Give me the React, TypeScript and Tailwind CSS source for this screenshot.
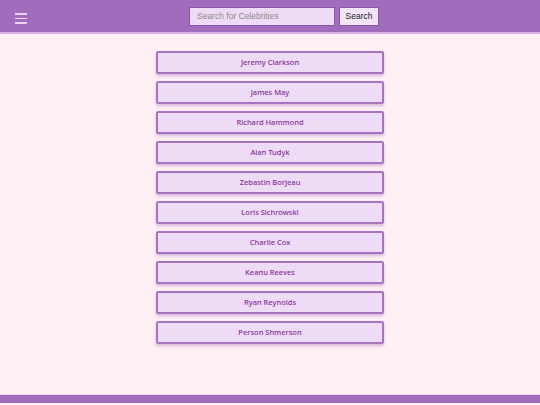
const celebrities = [
  'Jeremy Clarkson',
  'James May',
  'Richard Hammond',
  'Alan Tudyk',
  'Zebastin Borjeau',
  'Loris Sichrowski',
  'Charlie Cox',
  'Keanu Reeves',
  'Ryan Reynolds',
  'Person Shmerson',
]

export default function App() {
  return (
    <div className="flex flex-col h-[405px] bg-[#fff0f5] font-['Noto_Sans',sans-serif]">
      {/* Header */}
      <div className="h-[34px] shrink-0 bg-[#a26cbd] border-b-2 border-[#d9b3e6] flex items-center relative">
        <button className="absolute left-[15px] top-[13px] flex flex-col gap-[3px]">
          <span className="block w-[12px] h-[1.5px] bg-[#ecd3f3]" />
          <span className="block w-[12px] h-[1.5px] bg-[#ecd3f3]" />
          <span className="block w-[12px] h-[1.5px] bg-[#ecd3f3]" />
        </button>
        <div className="flex-1 flex justify-center gap-[4px] pl-[28px]">
          <input
            placeholder="Search for Celebrities"
            className="w-[146px] h-[19px] bg-[#eedcf6] border border-[#8b55ad] px-[7px] text-[8.5px] font-['Liberation_Sans',sans-serif] placeholder:text-[#8a8a8a] outline-none"
          />
          <button className="w-[40px] h-[19px] bg-[#f3e4f8] border border-[#8b55ad] text-[8.5px] font-normal text-[#222] font-['Liberation_Sans',sans-serif]">
            Search
          </button>
        </div>
      </div>

      {/* List */}
      <div className="flex-1 flex flex-col items-center gap-[7px] pt-[17px]">
        {celebrities.map((name) => (
          <div
            key={name}
            className="w-[228px] h-[23px] bg-[#eedcf6] border-2 border-[#a774c2] rounded-[2px] shadow-[0_2px_3px_rgba(140,80,170,0.35)] flex items-center justify-center text-[7.5px] font-medium text-[#86309a]"
          >
            {name}
          </div>
        ))}
      </div>

      {/* Footer */}
      <div className="h-[9px] shrink-0 mb-[2px] bg-[#a26cbd] border-t border-[#f0d0ea]" />
    </div>
  )
}
